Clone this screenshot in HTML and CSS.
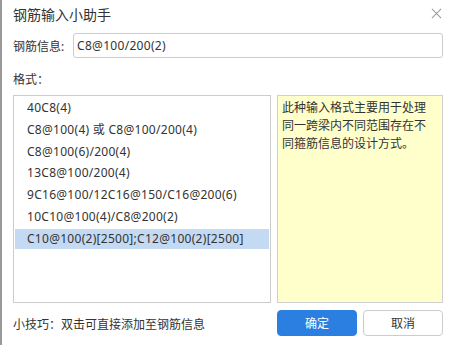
FILE: index.html
```html
<!DOCTYPE html>
<html lang="zh-CN">
<head>
  <meta charset="UTF-8" />
  <title>钢筋输入小助手</title>
  <link rel="stylesheet" href="styles.css">
</head>
<body>
  <div class="dialog">
    <div class="title-bar">
      <span class="title">钢筋输入小助手</span>
      <span class="close">
        <svg viewBox="0 0 12 12"><path d="M1 1L11 11M11 1L1 11" stroke="currentColor" stroke-width="1.1" fill="none"/></svg>
      </span>
    </div>

    <div class="info-row">
      <label class="info-label">钢筋信息:</label>
      <input class="info-input" type="text" value="C8@100/200(2)">
    </div>

    <div class="format-label">格式：</div>

    <div class="panels">
      <div class="format-list">
        <div class="format-item">40C8(4)</div>
        <div class="format-item">C8@100(4) 或 C8@100/200(4)</div>
        <div class="format-item">C8@100(6)/200(4)</div>
        <div class="format-item">13C8@100/200(4)</div>
        <div class="format-item">9C16@100/12C16@150/C16@200(6)</div>
        <div class="format-item">10C10@100(4)/C8@200(2)</div>
        <div class="format-item selected">C10@100(2)[2500];C12@100(2)[2500]</div>
      </div>
      <div class="format-desc">此种输入格式主要用于处理同一跨梁内不同范围存在不同箍筋信息的设计方式。</div>
    </div>

    <div class="footer">
      <span class="tip">小技巧：双击可直接添加至钢筋信息</span>
      <div class="buttons">
        <button class="btn btn-primary">确定</button>
        <button class="btn">取消</button>
      </div>
    </div>
  </div>
</body>
</html>
```

FILE: styles.css
```css
body {
  margin: 0;
  background: #ffffff;
  font-family: "Noto Sans", "Noto Sans CJK SC", sans-serif;
  color: #333333;
  font-size: 12px;
}

.dialog {
  width: 452px;
  height: 345px;
  box-sizing: border-box;
  border-left: 2px solid #9a9a9a;
  padding: 0 9px 0 11px;
}

.title-bar {
  height: 28px;
  display: flex;
  align-items: center;
  justify-content: space-between;
}

.title {
  font-size: 14px;
  color: #333333;
}

.close {
  width: 11px;
  height: 11px;
  color: #9a9a9a;
  margin-right: 1px;
  margin-top: -1px;
}

.close svg {
  width: 11px;
  height: 11px;
  display: block;
}

.info-row {
  display: flex;
  align-items: center;
  margin-top: 5px;
}

.info-label {
  width: 60px;
  font-size: 12px;
}

.info-input {
  flex: 1;
  height: 25px;
  box-sizing: border-box;
  border: 1px solid #cccccc;
  border-radius: 3px;
  padding: 0 3px;
  font-family: inherit;
  font-size: 12px;
  letter-spacing: 0.3px;
  color: #333333;
  outline: none;
}

.format-label {
  height: 20px;
  line-height: 20px;
  margin-top: 12px;
}

.panels {
  display: flex;
  gap: 6px;
  height: 208px;
  margin-top: 5px;
}

.format-list {
  width: 258px;
  box-sizing: border-box;
  border: 1px solid #cccccc;
  padding: 2px 1px;
  display: flex;
  flex-direction: column;
  gap: 1.8px;
}

.format-item {
  height: 20px;
  line-height: 20px;
  padding-left: 12px;
  white-space: nowrap;
  letter-spacing: 0.28px;
}

.format-item.selected {
  background: #c4daf2;
}

.format-desc {
  flex: 1;
  box-sizing: border-box;
  border: 1px solid #cfcfcf;
  background: #ffffcc;
  padding: 3px 8px 3px 4px;
  line-height: 18px;
}

.footer {
  display: flex;
  align-items: center;
  justify-content: space-between;
  margin-top: 7px;
}

.tip {
  margin-top: 2px;
}

.buttons {
  display: flex;
  gap: 6px;
}

.btn {
  width: 80px;
  height: 26px;
  border: 1px solid #cccccc;
  border-radius: 4px;
  background: #ffffff;
  color: #333333;
  font-family: inherit;
  font-size: 12px;
  padding: 0;
}

.btn-primary {
  background: #2b7fe0;
  border-color: #2b7fe0;
  color: #ffffff;
}
```
